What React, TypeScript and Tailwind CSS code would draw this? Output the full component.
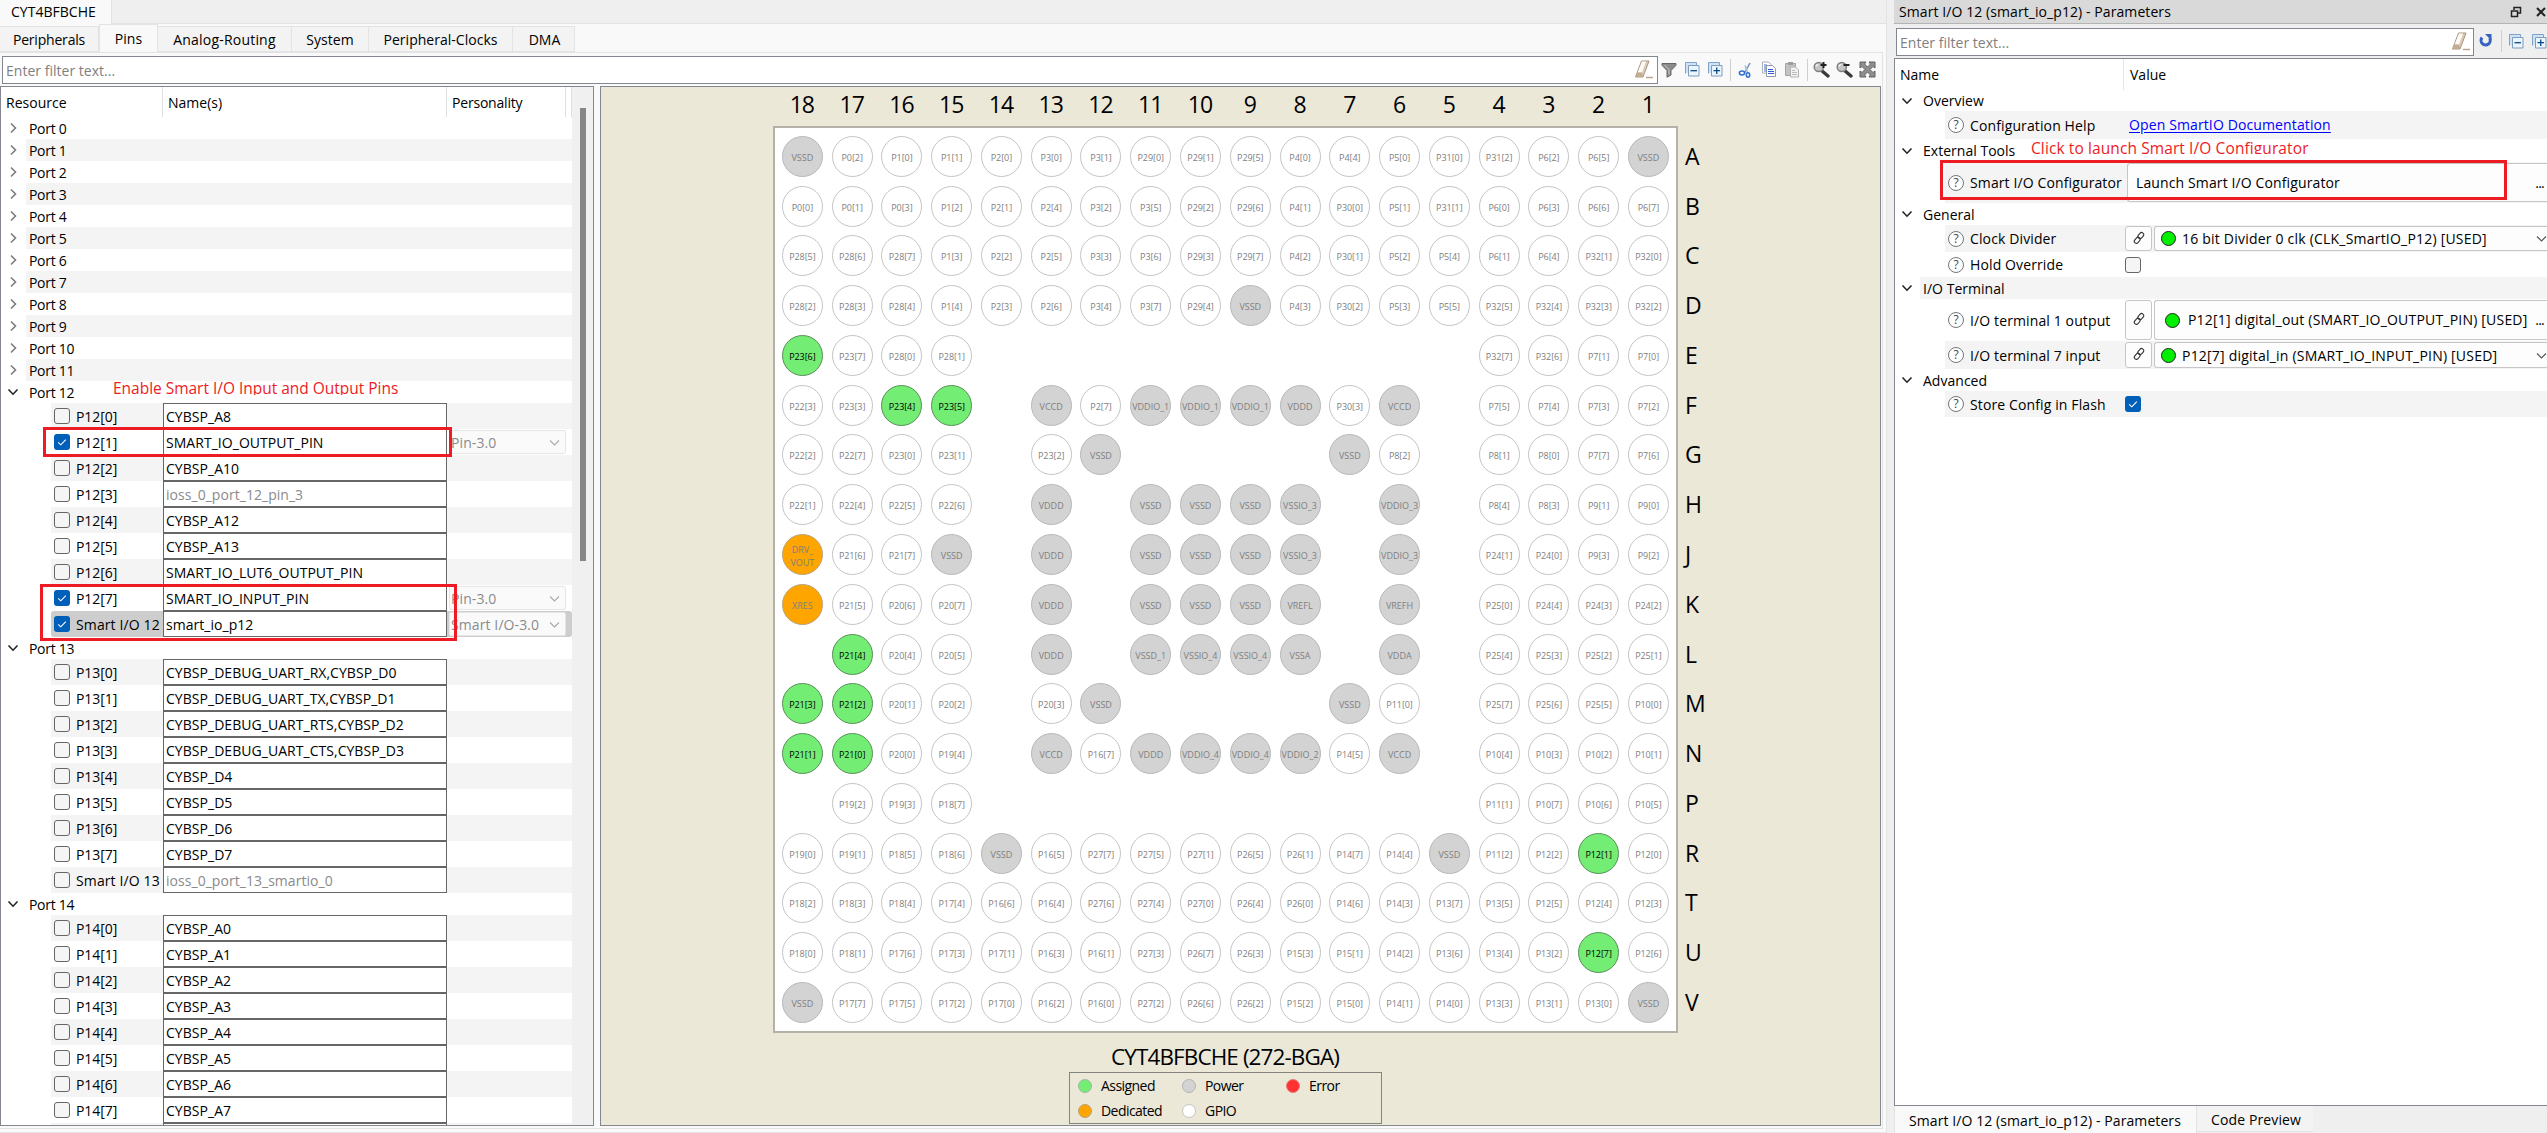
import React from "react";

const GRID: string[] = [
  "VSSD P0[2] P1[0] P1[1] P2[0] P3[0] P3[1] P29[0] P29[1] P29[5] P4[0] P4[4] P5[0] P31[0] P31[2] P6[2] P6[5] VSSD",
  "P0[0] P0[1] P0[3] P1[2] P2[1] P2[4] P3[2] P3[5] P29[2] P29[6] P4[1] P30[0] P5[1] P31[1] P6[0] P6[3] P6[6] P6[7]",
  "P28[5] P28[6] P28[7] P1[3] P2[2] P2[5] P3[3] P3[6] P29[3] P29[7] P4[2] P30[1] P5[2] P5[4] P6[1] P6[4] P32[1] P32[0]",
  "P28[2] P28[3] P28[4] P1[4] P2[3] P2[6] P3[4] P3[7] P29[4] VSSD P4[3] P30[2] P5[3] P5[5] P32[5] P32[4] P32[3] P32[2]",
  "P23[6] P23[7] P28[0] P28[1] - - - - - - - - - - P32[7] P32[6] P7[1] P7[0]",
  "P22[3] P23[3] P23[4] P23[5] - VCCD P2[7] VDDIO_1 VDDIO_1 VDDIO_1 VDDD P30[3] VCCD - P7[5] P7[4] P7[3] P7[2]",
  "P22[2] P22[7] P23[0] P23[1] - P23[2] VSSD - - - - VSSD P8[2] - P8[1] P8[0] P7[7] P7[6]",
  "P22[1] P22[4] P22[5] P22[6] - VDDD - VSSD VSSD VSSD VSSIO_3 - VDDIO_3 - P8[4] P8[3] P9[1] P9[0]",
  "DRV_VOUT P21[6] P21[7] VSSD - VDDD - VSSD VSSD VSSD VSSIO_3 - VDDIO_3 - P24[1] P24[0] P9[3] P9[2]",
  "XRES P21[5] P20[6] P20[7] - VDDD - VSSD VSSD VSSD VREFL - VREFH - P25[0] P24[4] P24[3] P24[2]",
  "- P21[4] P20[4] P20[5] - VDDD - VSSD_1 VSSIO_4 VSSIO_4 VSSA - VDDA - P25[4] P25[3] P25[2] P25[1]",
  "P21[3] P21[2] P20[1] P20[2] - P20[3] VSSD - - - - VSSD P11[0] - P25[7] P25[6] P25[5] P10[0]",
  "P21[1] P21[0] P20[0] P19[4] - VCCD P16[7] VDDD VDDIO_4 VDDIO_4 VDDIO_2 P14[5] VCCD - P10[4] P10[3] P10[2] P10[1]",
  "- P19[2] P19[3] P18[7] - - - - - - - - - - P11[1] P10[7] P10[6] P10[5]",
  "P19[0] P19[1] P18[5] P18[6] VSSD P16[5] P27[7] P27[5] P27[1] P26[5] P26[1] P14[7] P14[4] VSSD P11[2] P12[2] P12[1] P12[0]",
  "P18[2] P18[3] P18[4] P17[4] P16[6] P16[4] P27[6] P27[4] P27[0] P26[4] P26[0] P14[6] P14[3] P13[7] P13[5] P12[5] P12[4] P12[3]",
  "P18[0] P18[1] P17[6] P17[3] P17[1] P16[3] P16[1] P27[3] P26[7] P26[3] P15[3] P15[1] P14[2] P13[6] P13[4] P13[2] P12[7] P12[6]",
  "VSSD P17[7] P17[5] P17[2] P17[0] P16[2] P16[0] P27[2] P26[6] P26[2] P15[2] P15[0] P14[1] P14[0] P13[3] P13[1] P13[0] VSSD",
];
const ROW_LETTERS = "ABCDEFGHJKLMNPRTUV".split("");
const COLUMNS = Array.from({ length: 18 }, (_, i) => 18 - i);
const ASSIGNED = new Set([
  "P23[6]", "P23[4]", "P23[5]", "P21[4]", "P21[3]", "P21[2]", "P21[1]", "P21[0]", "P12[1]", "P12[7]",
]);

function pinColors(name: string) {
  if (ASSIGNED.has(name)) return "bg-[#73ed73] border-[#5a8f5a] text-black";
  if (name === "DRV_VOUT" || name === "XRES") return "bg-[#ffa500] border-[#b9a37c] text-[#808080]";
  if (name.startsWith("V")) return "bg-[#d3d3d3] border-[#b8b8b8] text-[#808080]";
  return "bg-white border-[#c4c4c4] text-[#808080]";
}

function Pin({ name }: { name: string }) {
  if (name === "-") return <div />;
  return (
    <div className="flex items-center justify-center">
      <div
        className={
          "flex h-[41px] w-[41px] items-center justify-center whitespace-nowrap rounded-full border pt-[2px] text-center text-[9px] leading-[13px] " +
          (name.startsWith("P") ? "tracking-[-0.05px] " : "tracking-[0px] ") +
          pinColors(name)
        }
      >
        {name === "DRV_VOUT" ? (
          <span>
            DRV_
            <br />
            VOUT
          </span>
        ) : (
          name
        )}
      </div>
    </div>
  );
}

/* ---------- icons ---------- */

function Chevron({ open }: { open?: boolean }) {
  return (
    <svg width="12" height="12" viewBox="0 0 12 12" fill="none" stroke={open ? "#222" : "#7c7c7c"} strokeWidth="1.6">
      <path d={open ? "M1.5 3.5 6 8.2 10.500 3.500" : "M4 1.500 8.500 6 4 10.500"} />
    </svg>
  );
}

function ComboArrow({ color }: { color: string }) {
  return (
    <svg width="11" height="11" viewBox="0 0 11 11" fill="none" stroke={color} strokeWidth="1.1">
      <path d="M1 3.500 5.500 8 10 3.500" />
    </svg>
  );
}

function CheckBox({ on }: { on?: boolean }) {
  return (
    <span
      className={
        "flex h-4 w-4 shrink-0 items-center justify-center rounded-[3px] " +
        (on ? "bg-[#005fb8]" : "border border-[#666] bg-[#f5f5f5]")
      }
    >
      {on && (
        <svg width="10" height="10" viewBox="0 0 10 10" fill="none" stroke="#fff" strokeWidth="1.1">
          <path d="M1.200 5.300 3.800 7.800 8.800 2.600" />
        </svg>
      )}
    </span>
  );
}

function Eraser() {
  return (
    <svg width="20" height="20" viewBox="0 0 20 20">
      <path d="M7.500 1 15 1 9 17 1.500 17Z" fill="#dccab5" stroke="#a8957f" />
      <path d="M8 1.500 12 1.500 8 12.500 3.600 12.500Z" fill="#fdfaf5" />
      <path d="M3.500 12.500 7.800 12.500 9 16.500 2 16.500Z" fill="#c2ac92" />
      <path d="M12 17.500h7" stroke="#b8a791" strokeWidth="1.500" />
    </svg>
  );
}

function Funnel() {
  return (
    <svg width="16" height="16" viewBox="0 0 16 16">
      <path d="M1 1.500h14v1.800L10 8.500v4.500l-4 2.200V8.500L1 3.300Z" fill="#8b8b8b" stroke="#666" />
      <path d="M3.500 3 8 7.500v5" fill="none" stroke="#cfcfcf" />
    </svg>
  );
}

function Boxes({ plus }: { plus?: boolean }) {
  return (
    <svg width="15" height="15" viewBox="0 0 15 15" fill="none">
      <path d="M.500 11.500V.500h11V3" stroke="#7fa3c8" />
      <path d="M1 1h10v10H1z" fill="#cfe3f5" />
      <path d="M3.500 3.500h10.500v10.500h-10.500z" fill="#eaf5fd" stroke="#7f9cbd" />
      <path d={plus ? "M5.500 8.700h6.500M8.750 5.500v6.500" : "M5.500 8.700h6.500"} stroke="#0b4a86" strokeWidth="1.300" />
    </svg>
  );
}

function Scissors() {
  return (
    <svg width="16" height="16" viewBox="0 0 16 16" fill="none">
      <path d="M12 1 6.500 11" stroke="#6f8fc0" strokeWidth="1.500" />
      <path d="M7 3.500 9.800 11" stroke="#a9bddc" strokeWidth="1.500" />
      <ellipse cx="4" cy="11" rx="2.600" ry="1.900" stroke="#2f6ed3" strokeWidth="1.500" />
      <ellipse cx="10" cy="13" rx="1.700" ry="2.200" stroke="#2f6ed3" strokeWidth="1.500" />
    </svg>
  );
}

function CopyIcon() {
  return (
    <svg width="16" height="17" viewBox="0 0 16 17" fill="none">
      <path d="M1.500 1h6L10 3.500V12H1.500z" fill="#fff" stroke="#aab0ba" />
      <path d="M3 4h3M3 6h2M3 8h2M3 10h2" stroke="#3a6ad0" />
      <path d="M5.500 4.500h6l3 3v8h-9z" fill="#fff" stroke="#9098a5" />
      <path d="M7 8.500h5M7 10.500h6M7 12.500h6" stroke="#2c5fd0" strokeWidth="1.200" />
    </svg>
  );
}

function PasteIcon() {
  return (
    <svg width="16" height="17" viewBox="0 0 16 17" fill="none">
      <path d="M1.500 2.500h10v12h-10z" fill="#c3c3c3" stroke="#a3a3a3" />
      <path d="M4 1h5v3H4z" fill="#9c9c9c" />
      <path d="M6.500 6h5l3 3v7h-8z" fill="#f1f1f1" stroke="#b2b2b2" />
      <path d="M8 9.500h3M8 11.500h5M8 13.500h5" stroke="#bdbdbd" />
    </svg>
  );
}

function Magnifier({ plus }: { plus?: boolean }) {
  return (
    <svg width="17" height="17" viewBox="0 0 17 17" fill="none">
      <path d="M8.500 9.500 15 15" stroke="#3a3a3a" strokeWidth="3.400" strokeLinecap="round" />
      <circle cx="5.800" cy="6" r="4.600" fill="#c4c4c4" stroke="#808080" strokeWidth="1.500" />
      <path d="M3 5.500a3 3 0 0 1 2.500-2.200" stroke="#f4f4f4" strokeWidth="1.300" />
      <path d={plus ? "M7.500 4h6M10.500 1v6" : "M7.500 4h6"} stroke="#222" strokeWidth="2" />
    </svg>
  );
}

function FitIcon() {
  return (
    <svg width="17" height="17" viewBox="0 0 17 17">
      <path
        d="M1 1h6L5.500 3 8.500 6 11.500 3 10 1h6v6L14 5.500 11 8.500 14 11.500 16 10v6h-6l1.500-2L8.500 11 5.500 14 7 16H1v-6l2 1.500L6 8.500 3 5.500 1 7Z"
        fill="#8e8e8e"
        stroke="#636363"
      />
    </svg>
  );
}

function ResetIcon() {
  return (
    <svg width="14" height="16" viewBox="0 0 14 16" fill="none">
      <path d="M3 4.500A4.600 4.600 0 1 0 10.600 5" stroke="#3564c0" strokeWidth="3" />
      <path d="M6 1h6.500v6.500Z" fill="#3564c0" />
    </svg>
  );
}

function HelpIcon() {
  return (
    <span className="flex h-4 w-4 shrink-0 items-center justify-center rounded-full border border-[#777] bg-white text-[12px] leading-none tracking-normal text-[#444]">
      ?
    </span>
  );
}

function LinkIcon() {
  return (
    <svg width="14" height="14" viewBox="0 0 14 14" fill="none" stroke="#333" strokeWidth="1.100">
      <rect x="6.700" y="1.300" width="4.200" height="6.600" rx="2.100" transform="rotate(40 8.800 4.600)" />
      <rect x="3.100" y="6" width="4.200" height="6.600" rx="2.100" transform="rotate(40 5.200 9.300)" />
    </svg>
  );
}

/* ---------- resource tree ---------- */

function PortRow({ label, open, shade }: { label: string; open?: boolean; shade?: boolean }) {
  return (
    <div className="flex h-[22px] shrink-0">
      <div className="flex w-[25px] items-center pl-[6px]">
        <Chevron open={open} />
      </div>
      <div
        className={
          "flex flex-1 items-center pl-[3px] pt-[2px] tracking-[-0.3px] " + (shade ? "bg-[#f4f4f4]" : "")
        }
      >
        {label}
      </div>
    </div>
  );
}

type PinRowProps = {
  label: string;
  name: string;
  shade?: boolean;
  on?: boolean;
  ghost?: boolean;
  kind?: string;
  selected?: boolean;
};

function PinRow({ label, name, shade, on, ghost, kind, selected }: PinRowProps) {
  return (
    <div className="flex h-[26px] shrink-0 pl-[50px]">
      <div
        className={
          "flex flex-1 items-stretch " +
          (selected ? "rounded-[3px] bg-[#cdcdcd]" : shade ? "bg-[#f4f4f4]" : "")
        }
      >
        <div className="flex w-[112px] items-center gap-[6px] whitespace-nowrap pl-[3px]">
          <CheckBox on={on} />
          <span className={label.startsWith("S") ? "pt-px tracking-[0.12px]" : "pt-px tracking-[-0.05px]"}>
            {label}
          </span>
        </div>
        <div
          className={
            "flex w-[284px] items-center border border-[#666] bg-white pl-[2px] pt-px tracking-[0.040px] " +
            (ghost ? "text-[#8a8a8a]" : "")
          }
        >
          {name}
        </div>
        {kind && (
          <div className="my-px ml-[2px] flex w-[117px] items-center justify-between rounded-[2px] border border-[#e6e6e6] bg-[#fafafa] pl-[1px] pr-[5px] tracking-[0.1px] text-[#8a8a8a]">
            <span className="pt-px">{kind}</span>
            <ComboArrow color="#aaa" />
          </div>
        )}
      </div>
    </div>
  );
}

const P12: PinRowProps[] = [
  { label: "P12[0]", name: "CYBSP_A8" },
  { label: "P12[1]", name: "SMART_IO_OUTPUT_PIN", on: true, kind: "Pin-3.0" },
  { label: "P12[2]", name: "CYBSP_A10" },
  { label: "P12[3]", name: "ioss_0_port_12_pin_3", ghost: true },
  { label: "P12[4]", name: "CYBSP_A12" },
  { label: "P12[5]", name: "CYBSP_A13" },
  { label: "P12[6]", name: "SMART_IO_LUT6_OUTPUT_PIN" },
  { label: "P12[7]", name: "SMART_IO_INPUT_PIN", on: true, kind: "Pin-3.0" },
  { label: "Smart I/O 12", name: "smart_io_p12", on: true, kind: "Smart I/O-3.0", selected: true },
];
const P13: PinRowProps[] = [
  { label: "P13[0]", name: "CYBSP_DEBUG_UART_RX,CYBSP_D0" },
  { label: "P13[1]", name: "CYBSP_DEBUG_UART_TX,CYBSP_D1" },
  { label: "P13[2]", name: "CYBSP_DEBUG_UART_RTS,CYBSP_D2" },
  { label: "P13[3]", name: "CYBSP_DEBUG_UART_CTS,CYBSP_D3" },
  { label: "P13[4]", name: "CYBSP_D4" },
  { label: "P13[5]", name: "CYBSP_D5" },
  { label: "P13[6]", name: "CYBSP_D6" },
  { label: "P13[7]", name: "CYBSP_D7" },
  { label: "Smart I/O 13", name: "ioss_0_port_13_smartio_0", ghost: true },
];
const P14: PinRowProps[] = Array.from({ length: 8 }, (_, i) => ({ label: `P14[${i}]`, name: `CYBSP_A${i}` }));

function PortGroup({ label, pins }: { label: string; pins: PinRowProps[] }) {
  return (
    <>
      <PortRow label={label} open />
      {pins.map((p, i) => (
        <PinRow key={p.label} {...p} shade={i % 2 === 0} />
      ))}
    </>
  );
}

function ResourceTree() {
  return (
    <div className="relative flex h-[1040px] w-[594px] overflow-hidden border border-[#828790] bg-white">
      <div className="flex w-[571px] flex-col">
        <div className="flex h-[30px] shrink-0 items-stretch">
          <div className="flex w-[162px] items-center border-r border-[#e0e0e0] pl-[5px] pt-[2px]">Resource</div>
          <div className="flex w-[284px] items-center border-r border-[#e0e0e0] pl-[5px] pt-[2px]">Name(s)</div>
          <div className="flex w-[119px] items-center border-r border-[#e0e0e0] pl-[5px] pt-[2px] tracking-[-0.2px]">
            Personality
          </div>
          <div className="w-[6px] border-r border-[#e0e0e0]" />
        </div>
        {Array.from({ length: 12 }, (_, i) => (
          <PortRow key={i} label={`Port ${i}`} shade={i % 2 === 1} />
        ))}
        <PortGroup label="Port 12" pins={P12} />
        <PortGroup label="Port 13" pins={P13} />
        <PortGroup label="Port 14" pins={P14} />
        <div className="ml-[50px] flex flex-1 bg-[#f4f4f4]">
          <div className="ml-[112px] w-[284px] border border-b-0 border-[#666] bg-white" />
        </div>
      </div>
      <div className="flex-1 bg-[#f0f0f0] pl-[8px] pt-[21px]">
        <div className="h-[453px] w-[6px] bg-[#868686]" />
      </div>
      <div className="absolute left-[112px] top-[290px] h-[18px] overflow-hidden whitespace-nowrap text-[15.500px] leading-[23px] tracking-[-0.02px] text-[#ed1c24]">
        Enable Smart I/O Input and Output Pins
      </div>
      <div className="absolute left-[42px] top-[340px] h-[30px] w-[409px] border-[3px] border-[#ed1c24]" />
      <div className="absolute left-[39px] top-[497px] h-[57px] w-[417px] border-[3px] border-[#ed1c24]" />
    </div>
  );
}

/* ---------- package view ---------- */

function LegendItem({ color, label }: { color: string; label: string }) {
  return (
    <div className="flex w-[104px] items-center gap-[9px]">
      <span className={"h-[14px] w-[14px] rounded-full border " + color} />
      <span className="tracking-[-0.550px]">{label}</span>
    </div>
  );
}

function PackageView() {
  return (
    <div className="ml-[6px] flex h-[1040px] w-[1281px] flex-col border border-[#828790] bg-[#ebe8d8]">
      <div className="ml-[176px] grid h-[39px] grid-cols-[repeat(18,49.770px)] text-center text-[23px] leading-[34px] tracking-[-1px]">
        {COLUMNS.map((c) => (
          <span key={c}>{c}</span>
        ))}
      </div>
      <div className="flex">
        <div className="ml-[171.500px] h-[907px] w-[905.500px] border-2 border-[#b4b2a8] bg-white px-[3px] pt-[3.500px]">
          <div className="grid auto-rows-[49.780px] grid-cols-[repeat(18,49.770px)]">
            {GRID.flatMap((row, r) => row.split(" ").map((name, c) => <Pin key={`${r}-${c}`} name={name} />))}
          </div>
        </div>
        <div className="grid auto-rows-[49.780px] pl-[7px] pt-[5px] text-[23px]">
          {ROW_LETTERS.map((l) => (
            <span key={l} className="flex items-center">
              {l}
            </span>
          ))}
        </div>
      </div>
      <div className="mt-[7px] h-[32px] w-[1248px] whitespace-nowrap text-center text-[22.500px] leading-[34px] tracking-[-0.900px]">
        CYT4BFBCHE (272-BGA)
      </div>
      <div className="ml-[468px] grid h-[52px] w-[313px] grid-cols-[104px_104px_104px] grid-rows-[25px_25px] border border-[#85847c] pl-[8px]">
        <LegendItem color="bg-[#73ed73] border-[#a3b8a3]" label="Assigned" />
        <LegendItem color="bg-[#d3d3d3] border-[#b5b5b5]" label="Power" />
        <LegendItem color="bg-[#ff3131] border-[#e08080]" label="Error" />
        <LegendItem color="bg-[#ffa500] border-[#b9a37c]" label="Dedicated" />
        <LegendItem color="bg-white border-[#c4c4c4]" label="GPIO" />
      </div>
    </div>
  );
}

/* ---------- parameters ---------- */

function Group({ label, h, shade }: { label: string; h: string; shade?: boolean }) {
  return (
    <div className={"flex shrink-0 items-stretch " + h}>
      <div className="flex w-[25px] items-center pl-[6px]">
        <Chevron open />
      </div>
      <div className={"flex flex-1 items-center pl-[3px] pt-px " + (shade ? "bg-[#f4f4f4]" : "")}>{label}</div>
    </div>
  );
}

function Param({
  label,
  h,
  shade,
  children,
}: {
  label: string;
  h: string;
  shade?: boolean;
  children: React.ReactNode;
}) {
  return (
    <div className={"flex shrink-0 pl-[50px] " + h}>
      <div className={"flex flex-1 items-stretch " + (shade ? "bg-[#f4f4f4]" : "")}>
        <div className="flex w-[180px] items-center gap-[6px] whitespace-nowrap pl-[3px] tracking-[0.12px]">
          <HelpIcon />
          <span className="pt-px">{label}</span>
        </div>
        <div className="flex flex-1 items-stretch whitespace-nowrap tracking-[0.12px]">{children}</div>
      </div>
    </div>
  );
}

function LinkButton() {
  return (
    <div className="my-px flex w-[27px] items-center justify-center rounded-[3px] border border-[#c6c6c6] bg-[#fdfdfd] pb-[2px]">
      <LinkIcon />
    </div>
  );
}

function Dot() {
  return <span className="h-[15px] w-[15px] shrink-0 rounded-full border border-[#222] bg-[#00f000]" />;
}

function Combo({ text }: { text: string }) {
  return (
    <div className="my-px ml-[2px] flex flex-1 items-center rounded-l-[3px] border border-r-0 border-[#c6c6c6] bg-[#fdfdfd] pl-[6px]">
      <Dot />
      <span className="ml-[6px] flex-1 pt-px tracking-[0.210px]">{text}</span>
      <ComboArrow color="#555" />
    </div>
  );
}

function Parameters() {
  return (
    <div className="flex h-[1133px] w-[653px] flex-col bg-[#efefef]">
      <div className="flex h-6 shrink-0 items-center border-b border-[#b4b4b4] bg-[#d9d9d9] pl-[5px]">
        <span className="flex-1 tracking-[0.080px]">Smart I/O 12 (smart_io_p12) - Parameters</span>
        <svg width="12" height="12" viewBox="0 0 12 12" fill="none" stroke="#222" strokeWidth="1.500">
          <path d="M4 4V1.500h6.500V7H8M1.500 5h6v5.500h-6z" />
        </svg>
        <svg width="10" height="10" viewBox="0 0 10 10" fill="none" stroke="#222" strokeWidth="2" className="ml-[14px] mr-px">
          <path d="M1 1l8 8M9 1 1 9" />
        </svg>
      </div>
      <div className="flex h-[34px] shrink-0 items-center">
        <div className="ml-[2px] mt-[2px] flex h-[28px] w-[582px] items-center border border-[#828790] bg-white pl-[3px] pr-[2px] text-[#808080]">
          <span className="flex-1 pt-[2px]">Enter filter text...</span>
          <Eraser />
        </div>
        <div className="flex items-center pl-[5px]">
          <ResetIcon />
          <span className="mx-[7px] ml-[8px] h-[22px] w-px bg-[#cfcfcf]" />
          <Boxes />
          <span className="w-[8px]" />
          <Boxes plus />
        </div>
      </div>
      <div className="relative flex h-[1048px] shrink-0 flex-col overflow-hidden border border-r-0 border-[#828790] bg-white">
        <div className="flex h-[31px] shrink-0">
          <div className="flex w-[229px] items-center border-r border-[#e5e5e5] pl-[5px]">Name</div>
          <div className="flex items-center pl-[6px]">Value</div>
        </div>
        <Group label="Overview" h="h-[21px]" />
        <Param label="Configuration Help" h="h-[28px]" shade>
          <a className="flex items-center pl-[4px] text-[#0000ff] underline underline-offset-2">
            Open SmartIO Documentation
          </a>
        </Param>
        <Group label="External Tools" h="h-[23px]" />
        <Param label="Smart I/O Configurator" h="h-[41px]" shade>
          <div className="my-px ml-[2px] flex flex-1 items-center rounded-l-[3px] border border-r-0 border-[#c6c6c6] bg-[#fdfdfd] pl-[8px] pr-[3px]">
            <span className="flex-1">Launch Smart I/O Configurator</span>
            <span className="tracking-[-0.800px]">...</span>
          </div>
        </Param>
        <Group label="General" h="h-[22px]" />
        <Param label="Clock Divider" h="h-[27px]" shade>
          <LinkButton />
          <Combo text="16 bit Divider 0 clk (CLK_SmartIO_P12) [USED]" />
        </Param>
        <Param label="Hold Override" h="h-[25px]">
          <div className="flex items-center">
            <CheckBox />
          </div>
        </Param>
        <Group label="I/O Terminal" h="h-[22px]" shade />
        <Param label="I/O terminal 1 output" h="h-[42px]">
          <LinkButton />
          <div className="my-px ml-[2px] flex flex-1 items-center rounded-l-[3px] border border-r-0 border-[#c6c6c6] bg-[#fdfdfd] pl-[10px] pr-[3px]">
            <Dot />
            <span className="ml-[8px] flex-1 tracking-[0.200px]">P12[1] digital_out (SMART_IO_OUTPUT_PIN) [USED]</span>
            <span className="tracking-[-0.800px]">...</span>
          </div>
        </Param>
        <Param label="I/O terminal 7 input" h="h-[28px]" shade>
          <LinkButton />
          <Combo text="P12[7] digital_in (SMART_IO_INPUT_PIN) [USED]" />
        </Param>
        <Group label="Advanced" h="h-[22px]" />
        <Param label="Store Config in Flash" h="h-[26px]" shade>
          <div className="flex items-center pb-px">
            <CheckBox on />
          </div>
        </Param>
        <div className="absolute left-[136px] top-[78px] h-[17px] overflow-hidden whitespace-nowrap text-[15.500px] leading-[23px] tracking-[0.1px] text-[#ed1c24]">
          Click to launch Smart I/O Configurator
        </div>
        <div className="absolute left-[45px] top-[101px] h-[40px] w-[567px] border-[3px] border-[#ed1c24]" />
      </div>
      <div className="flex flex-1">
        <div className="flex w-[303px] items-center whitespace-nowrap border-x border-[#e2e2e2] bg-[#f9f9f9] pl-[14px] pt-[3px] tracking-[0.080px]">
          Smart I/O 12 (smart_io_p12) - Parameters
        </div>
        <div className="mb-[1px] flex w-[116px] items-center border-b border-[#e2e2e2] bg-[#f3f3f3] pl-[14px] pt-[2px] tracking-[0.120px]">
          Code Preview
        </div>
      </div>
    </div>
  );
}

/* ---------- main area ---------- */

function Tab({ label, w, active }: { label: string; w: string; active?: boolean }) {
  return (
    <div
      className={
        "flex items-center justify-center border border-[#e3e3e3] " +
        w +
        (active ? " h-[28px] border-b-0 bg-[#f9f9f9] pt-[1px]" : " -ml-px h-[26px] bg-[#f3f3f3] pt-[2px]")
      }
    >
      {label}
    </div>
  );
}

function Separator() {
  return <span className="h-[22px] w-px bg-[#cfcfcf]" />;
}

export default function App() {
  return (
    <div className="flex h-[1133px] w-[2547px] overflow-hidden bg-[#efefef] font-['Open_Sans',sans-serif] text-[14px] leading-[20px] tracking-[0.020px] text-black">
      <div className="flex w-[1887px] flex-col border-r border-[#e3e3e3] bg-[#f9f9f9]">
        <div className="flex h-6 shrink-0">
          <div className="flex w-[112px] items-center border-r border-[#e3e3e3] pl-[11px]">CYT4BFBCHE</div>
          <div className="flex-1 border-b border-[#e3e3e3] bg-[#efefef]" />
        </div>
        <div className="flex h-[29px] w-[1883px] shrink-0 items-end border-b border-[#e3e3e3]">
          <Tab label="Peripherals" w="w-[100px] tracking-[-0.2px]" />
          <Tab label="Pins" w="w-[59px]" active />
          <Tab label="Analog-Routing" w="w-[135px] tracking-[0.2px]" />
          <Tab label="System" w="w-[78px]" />
          <Tab label="Peripheral-Clocks" w="w-[145px]" />
          <Tab label="DMA" w="w-[63px] pl-[2px]" />
        </div>
        <div className="flex h-[33px] w-[1883px] shrink-0 items-center border-r border-[#e3e3e3]">
          <div className="ml-[2px] mt-px flex h-[28px] w-[1656px] items-center border border-[#828790] bg-white pl-[3px] pr-[3px] text-[#808080]">
            <span className="flex-1 pt-px">Enter filter text...</span>
            <Eraser />
          </div>
          <div className="flex items-center pl-[3px]">
            <Funnel />
            <span className="w-[8px]" />
            <Boxes />
            <span className="w-[8px]" />
            <Boxes plus />
            <span className="w-[7px]" />
            <Separator />
            <span className="w-[7px]" />
            <Scissors />
            <span className="w-[7px]" />
            <CopyIcon />
            <span className="w-[7px]" />
            <PasteIcon />
            <span className="w-[7px]" />
            <Separator />
            <span className="w-[5px]" />
            <Magnifier plus />
            <span className="w-[6px]" />
            <Magnifier />
            <span className="w-[6px]" />
            <FitIcon />
          </div>
        </div>
        <div className="flex h-[1043px] w-[1883px] shrink-0 border-b border-r border-[#e3e3e3]">
          <ResourceTree />
          <PackageView />
        </div>
        <div className="h-[4px] border-b border-[#e3e3e3]" />
      </div>
      <div className="w-[7px]" />
      <Parameters />
    </div>
  );
}
